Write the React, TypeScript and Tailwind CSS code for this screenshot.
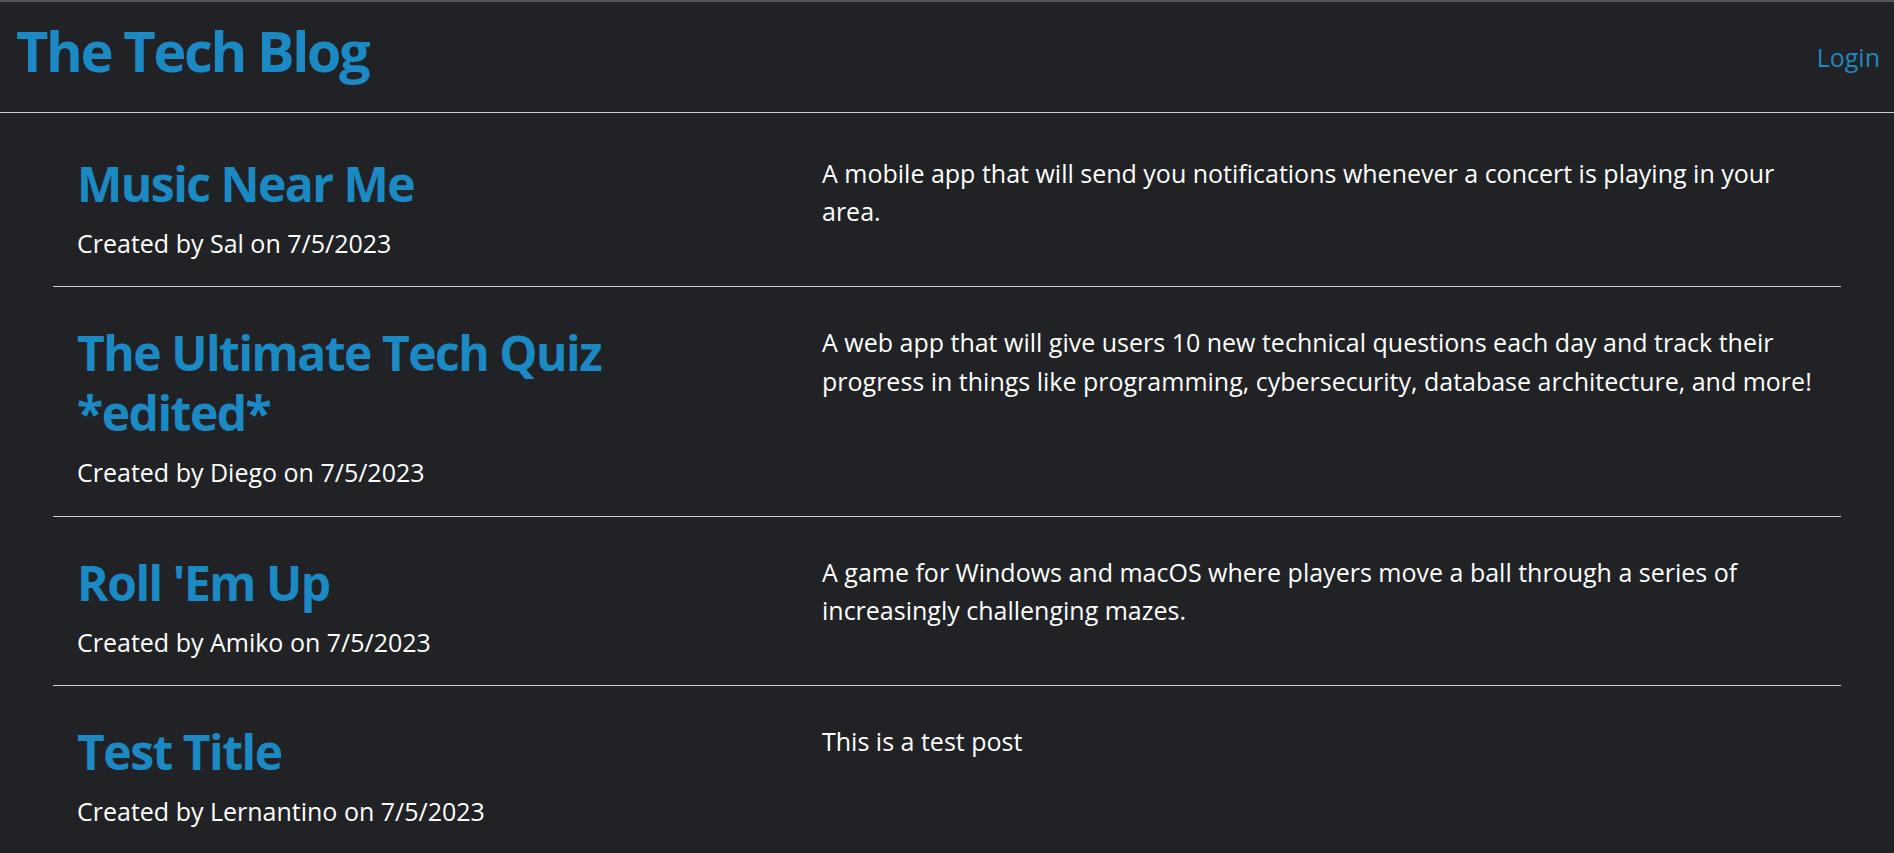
const posts = [
  {
    id: 1,
    title: 'Music Near Me',
    author: 'Sal',
    date: '7/5/2023',
    body: 'A mobile app that will send you notifications whenever a concert is playing in your area.',
  },
  {
    id: 2,
    title: 'The Ultimate Tech Quiz *edited*',
    author: 'Diego',
    date: '7/5/2023',
    body: 'A web app that will give users 10 new technical questions each day and track their progress in things like programming, cybersecurity, database architecture, and more!',
  },
  {
    id: 3,
    title: "Roll 'Em Up",
    author: 'Amiko',
    date: '7/5/2023',
    body: 'A game for Windows and macOS where players move a ball through a series of increasingly challenging mazes.',
  },
  {
    id: 4,
    title: 'Test Title',
    author: 'Lernantino',
    date: '7/5/2023',
    body: 'This is a test post',
  },
]

export default function App() {
  return (
    <div className="min-h-screen bg-[#212226] text-white border-t-2 border-[#555] font-['Open_Sans',sans-serif]">
      {/* Header */}
      <header className="flex justify-between items-start h-[111px] border-b border-[#cfcfcf] pl-4 pr-[14px]">
        <h1 className="mt-[15px] text-[56px] leading-[1.2] font-bold tracking-[-2.4px] text-[#1b8ac4]">The Tech Blog</h1>
        <a href="#" className="mt-[37px] text-[25px] leading-[1.5] text-[#2585bd]">
          Login
        </a>
      </header>

      {/* Posts */}
      <main className="mx-[53px] pt-[5px]">
        {posts.map((post) => (
          <div key={post.id} className="grid grid-cols-12 border-b border-[#cfcfcf] pt-9 pb-6">
            <div className="col-span-5 px-6">
              <h2 className="text-[48px] leading-[60px] font-bold tracking-[-1.5px] text-[#1b8ac4] mb-[10px]">
                {post.title}
              </h2>
              <p className="text-[25px] leading-[38.4px]">
                Created by {post.author} on {post.date}
              </p>
            </div>
            <div className="col-span-7 px-6">
              <p className="text-[25px] leading-[38.4px]">{post.body}</p>
            </div>
          </div>
        ))}
      </main>
    </div>
  )
}
